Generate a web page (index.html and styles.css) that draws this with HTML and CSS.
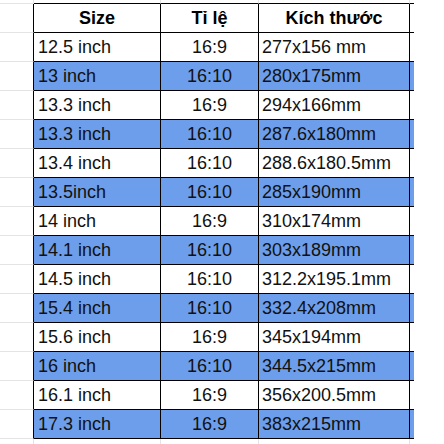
FILE: index.html
```html
<!DOCTYPE html>
<html lang="vi">
<head>
<meta charset="utf-8">
<title>Kích thước màn hình</title>
<link rel="stylesheet" href="styles.css">
</head>
<body>
<div class="sheet">
  <div class="row edge-top"><div class="gut"></div><div></div><div></div><div></div><div class="ext"></div></div>
  <div class="row head"><div class="gut"></div><div class="c1">Size</div><div class="c2">Tỉ lệ</div><div class="c3">Kích thước</div><div class="ext"></div></div>
  <div class="row"><div class="gut"></div><div class="c1">12.5 inch</div><div class="c2">16:9</div><div class="c3">277x156 mm</div><div class="ext"></div></div>
  <div class="row blue"><div class="gut"></div><div class="c1">13 inch</div><div class="c2">16:10</div><div class="c3">280x175mm</div><div class="ext"></div></div>
  <div class="row"><div class="gut"></div><div class="c1">13.3 inch</div><div class="c2">16:9</div><div class="c3">294x166mm</div><div class="ext"></div></div>
  <div class="row blue"><div class="gut"></div><div class="c1">13.3 inch</div><div class="c2">16:10</div><div class="c3">287.6x180mm</div><div class="ext"></div></div>
  <div class="row"><div class="gut"></div><div class="c1">13.4 inch</div><div class="c2">16:10</div><div class="c3">288.6x180.5mm</div><div class="ext"></div></div>
  <div class="row blue"><div class="gut"></div><div class="c1">13.5inch</div><div class="c2">16:10</div><div class="c3">285x190mm</div><div class="ext"></div></div>
  <div class="row"><div class="gut"></div><div class="c1">14 inch</div><div class="c2">16:9</div><div class="c3">310x174mm</div><div class="ext"></div></div>
  <div class="row blue"><div class="gut"></div><div class="c1">14.1 inch</div><div class="c2">16:10</div><div class="c3">303x189mm</div><div class="ext"></div></div>
  <div class="row"><div class="gut"></div><div class="c1">14.5 inch</div><div class="c2">16:10</div><div class="c3">312.2x195.1mm</div><div class="ext"></div></div>
  <div class="row blue"><div class="gut"></div><div class="c1">15.4 inch</div><div class="c2">16:10</div><div class="c3">332.4x208mm</div><div class="ext"></div></div>
  <div class="row"><div class="gut"></div><div class="c1">15.6 inch</div><div class="c2">16:9</div><div class="c3">345x194mm</div><div class="ext"></div></div>
  <div class="row blue"><div class="gut"></div><div class="c1">16 inch</div><div class="c2">16:10</div><div class="c3">344.5x215mm</div><div class="ext"></div></div>
  <div class="row"><div class="gut"></div><div class="c1">16.1 inch</div><div class="c2">16:9</div><div class="c3">356x200.5mm</div><div class="ext"></div></div>
  <div class="row blue"><div class="gut"></div><div class="c1">17.3 inch</div><div class="c2">16:9</div><div class="c3">383x215mm</div><div class="ext"></div></div>
  <div class="row edge-bottom"><div class="gut"></div><div></div><div></div><div></div><div class="ext"></div></div>
</div>
</body>
</html>
```

FILE: styles.css
```css
html, body {
  margin: 0;
  padding: 0;
  background: #ffffff;
}

body {
  font-family: "Liberation Sans", Arial, sans-serif;
  font-size: 18px;
  color: #111111;
}

.sheet {
  display: flex;
  flex-direction: column;
}

.row {
  display: grid;
  grid-template-columns: 34px 127px 98px 151px 4px;
  height: 29px;
}

.row > div {
  box-sizing: border-box;
  border-right: 1px solid #000000;
  border-bottom: 1px solid #000000;
  display: flex;
  align-items: center;
  white-space: nowrap;
  overflow: hidden;
}

.row > .gut {
  border-bottom-color: #e4e4e4;
}

.row > .ext {
  border-right: none;
}

.c1 {
  padding-left: 4px;
}

.c2 {
  justify-content: center;
}

.c3 {
  padding-left: 3px;
}

.head > div {
  justify-content: center;
  padding-left: 0;
  font-weight: bold;
  color: #000000;
}

.blue > div {
  background: #6d9eeb;
}

.blue > .gut {
  background: #ffffff;
}

.edge-top {
  height: 4px;
}

.edge-top > div {
  border-right-color: #e4e4e4;
}

.edge-bottom {
  height: 6px;
}

.edge-bottom > div {
  border-right-color: #e4e4e4;
  border-bottom: none;
}
```
